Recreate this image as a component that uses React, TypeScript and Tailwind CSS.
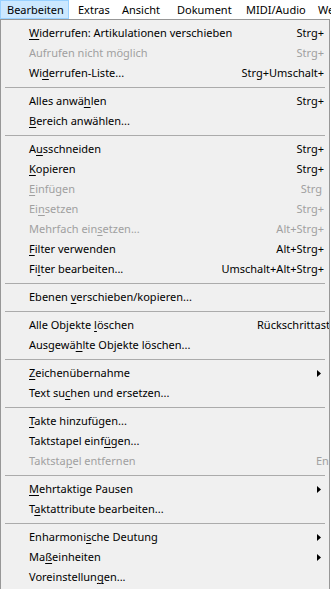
import React from "react";

type Item =
  | { sep: true }
  | {
      sep?: false;
      label: string;
      u?: number;
      sc?: string;
      disabled?: boolean;
      sub?: boolean;
      labelClass?: string;
      scClass?: string;
    };

const items: Item[] = [
  { label: "Widerrufen: Artikulationen verschieben", u: 0, sc: "Strg+" },
  { label: "Aufrufen nicht möglich", disabled: true, sc: "Strg+" },
  { label: "Widerrufen-Liste...", u: 2, sc: "Strg+Umschalt+" },
  { sep: true },
  { label: "Alles anwählen", u: 10, sc: "Strg+" },
  { label: "Bereich anwählen...", u: 0 },
  { sep: true },
  { label: "Ausschneiden", u: 1, sc: "Strg+" },
  { label: "Kopieren", u: 0, sc: "Strg+" },
  { label: "Einfügen", u: 0, disabled: true, sc: "Strg", scClass: "mr-[2px]" },
  { label: "Einsetzen", u: 2, disabled: true, sc: "Strg+" },
  { label: "Mehrfach einsetzen...", u: 12, disabled: true, sc: "Alt+Strg+" },
  { label: "Filter verwenden", u: 0, sc: "Alt+Strg+" },
  { label: "Filter bearbeiten...", u: 2, sc: "Umschalt+Alt+Strg+" },
  { sep: true },
  { label: "Ebenen verschieben/kopieren...", u: 7 },
  { sep: true },
  { label: "Alle Objekte löschen", u: 13, sc: "Rückschrittaste", labelClass: "w-[228px]" },
  { label: "Ausgewählte Objekte löschen...", u: 7 },
  { sep: true },
  { label: "Zeichenübernahme", u: 0, sub: true },
  { label: "Text suchen und ersetzen...", u: 7 },
  { sep: true },
  { label: "Takte hinzufügen...", u: 0 },
  { label: "Taktstapel einfügen...", u: 15 },
  { label: "Taktstapel entfernen", u: 7, disabled: true, sc: "Ende", labelClass: "w-[287px]" },
  { sep: true },
  { label: "Mehrtaktige Pausen", u: 0, sub: true },
  { label: "Taktattribute bearbeiten...", u: 1 },
  { sep: true },
  { label: "Enharmonische Deutung", u: 9, sub: true },
  { label: "Maßeinheiten", u: 2, sub: true },
  { label: "Voreinstellungen...", u: 13 },
];

function Label({ text, u }: { text: string; u?: number }) {
  if (u === undefined) return <>{text}</>;
  return (
    <>
      {text.slice(0, u)}
      <span className="underline decoration-1 underline-offset-[2px]">{text[u]}</span>
      {text.slice(u + 1)}
    </>
  );
}

const bar = [
  { name: "Extras", w: "w-[44px]" },
  { name: "Ansicht", w: "w-[55px]" },
  { name: "Dokument", w: "w-[69px]" },
  { name: "MIDI/Audio", w: "w-[72px]" },
  { name: "Werkzeuge", w: "w-[80px]" },
];

export default function App() {
  return (
    <div className="h-[589px] w-[331px] overflow-hidden bg-white font-['Noto_Sans',sans-serif] text-[11px] text-black">
      <div className="flex h-[19px] items-stretch overflow-hidden whitespace-nowrap leading-[17px]">
        <div className="mr-[2px] w-[69px] shrink-0 border border-[#99d1ff] bg-[#cce8ff] pl-[6px]">
          Bearbeiten
        </div>
        {bar.map((b) => (
          <div key={b.name} className={`${b.w} shrink-0 pl-[7px] pt-px`}>
            {b.name}
          </div>
        ))}
      </div>

      <div className="w-[330px] overflow-hidden border border-[#979797] bg-[#f0f0f0] py-[3px]">
        {items.map((it, i) =>
          it.sep ? (
            <div key={i} className="flex h-2 items-center px-[4px]">
              <div className="h-px w-full bg-[#ababab]" />
            </div>
          ) : (
            <div
              key={i}
              className={`flex h-5 items-center whitespace-nowrap pl-[28px] pr-[5px] leading-5 ${
                it.disabled ? "text-[#a0a0a0]" : ""
              }`}
            >
              <span className={`shrink-0 ${it.labelClass ?? ""}`}>
                <Label text={it.label} u={it.u} />
              </span>
              {it.sc && (
                <span className={`shrink-0 ${it.labelClass ? "" : "ml-auto"} ${it.scClass ?? ""}`}>
                  {it.sc}
                </span>
              )}
              {it.sub && (
                <svg className="ml-auto mr-[3px]" width="4" height="7" viewBox="0 0 4 7">
                  <polygon points="0,0 4,3.5 0,7" fill="#000" />
                </svg>
              )}
            </div>
          )
        )}
      </div>
    </div>
  );
}
